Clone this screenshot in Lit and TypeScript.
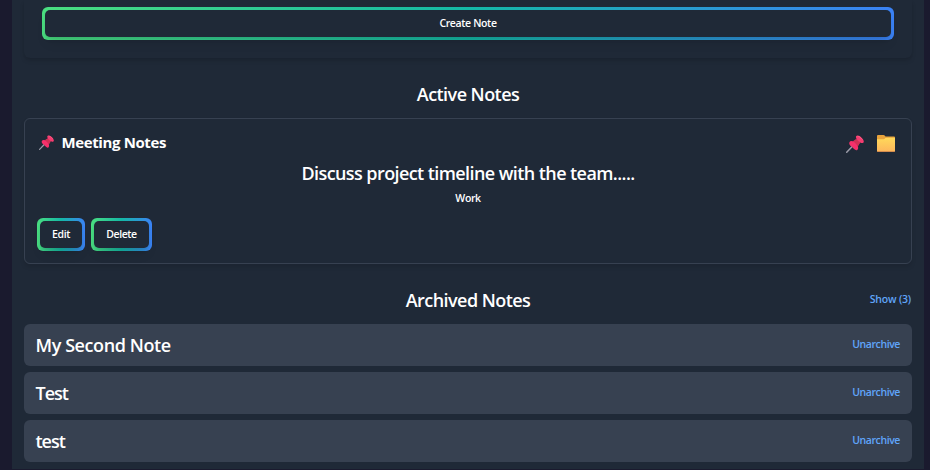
import { LitElement, html, css, svg } from "lit";
import { customElement, property } from "lit/decorators.js";

@customElement("gradient-button")
class GradientButton extends LitElement {
  static styles = css`
    :host { display: block; }
    button {
      display: block; width: 100%; height: 33px; padding: 3px; border: 0; border-radius: 6px;
      background: linear-gradient(to right, #4ade80, #14b8a6, #3b82f6);
      font: inherit; letter-spacing: inherit; color: #fff;
    }
    span {
      display: flex; align-items: center; justify-content: center; height: 27px;
      box-sizing: border-box; padding-bottom: 1px; border-radius: 5px; background: #1f2937;
      box-shadow: 0 7.5px 11px -2px rgba(0, 0, 0, .1), 0 3px 4.5px -1.5px rgba(0, 0, 0, .1);
      white-space: nowrap;
    }
  `;
  render() {
    return html`<button><span><slot></slot></span></button>`;
  }
}

@customElement("pin-icon")
class PinIcon extends LitElement {
  static styles = css`:host { display: block; } svg { display: block; width: 100%; height: 100%; }`;
  render() {
    return html`<svg viewBox="0 0 18 18">${svg`
      <path d="M.7 17.3 7.2 10.5" stroke="#9b9ba8" stroke-width="1.5" stroke-linecap="round"/>
      <path d="M6.3 6.5 11 4.2 13.7 7 11.8 12z" fill="#c92a55"/>
      <path d="M3.4 7.2C4.4 5.3 7.2 5.8 9.6 8.2c2.6 2.5 3.4 5.3 1.7 6.7C9.4 16 7.600 13.600 6 11.800 4 10.600 2.600 9 3.400 7.200z" fill="#f5306b"/>
      <path d="M7.2 6.300 10.300 3.800 14.300 7.700 11.700 11.200C10.800 9 9 7.200 7.200 6.300z" fill="#d13055"/>
      <path d="M10.200 1.100C11.400-.2 13.700.8 15.600 2.700c2 1.900 2.800 4 1.700 5-1.400 1-3.500-.2-5-1.700C10.600 4.500 9.300 2.300 10.200 1.100z" fill="#f43c70"/>
      <path d="M11.600 1.300c1.200-.2 3.500 1.600 4.700 3.200" fill="none" stroke="#ff6e8c" stroke-width=".7"/>
    `}</svg>`;
  }
}

@customElement("folder-icon")
class FolderIcon extends LitElement {
  static styles = css`:host { display: block; } svg { display: block; width: 100%; height: 100%; }`;
  render() {
    return html`<svg viewBox="0 0 18 17">
      <defs><linearGradient id="face" x2="0" y2="1"><stop stop-color="#ffd95a"/><stop offset="1" stop-color="#fdb65c"/></linearGradient></defs>
      <path d="M0 1Q0 0 1 0h5.500q.7 0 1.200.6L8.500 1.500H17q1 0 1 1V15H0z" fill="#e8a33c"/>
      <path d="M0 4.200h6.700q.7 0 1.200-.6l.4-.5q.4-.4 1-.4H18V16q0 .8-.8.800H.8Q0 16.800 0 16z" fill="url(#face)"/>
      <path d="M.2 16.500h17.600" stroke="#d98b4c" stroke-width=".8"/>
    </svg>`;
  }
}

@customElement("archived-note")
class ArchivedNote extends LitElement {
  @property() name = "";
  static styles = css`
    :host {
      display: flex; justify-content: space-between; height: 42px; box-sizing: border-box;
      padding: 0 12px; border-radius: 6px; background: #374151;
    }
    h3 { margin: 0 0 0 -.5px; font-size: 18px; line-height: 43px; font-weight: 600; letter-spacing: inherit; }
    a { color: #60a5fa; font-size: 10.5px; line-height: 40px; letter-spacing: -.42px; }
  `;
  render() {
    return html`<h3>${this.name}</h3><a>Unarchive</a>`;
  }
}

@customElement("app-root")
class AppRoot extends LitElement {
  static styles = css`
    :host {
      display: block; height: 470px; overflow: hidden; box-sizing: border-box; padding: 0 6px 0 12px;
      background: #1a1a2e; color: #fff;
      font-family: "Open Sans", "Noto Sans", sans-serif; font-weight: 600; font-size: 10.5px;
    }
    main { height: 469px; box-sizing: border-box; padding: 0 12px; background: #1f2937; }
    .form {
      height: 58px; box-sizing: border-box; padding: 7px 18px 0; border-radius: 0 0 6px 6px;
      box-shadow: 0 3px 4.5px -.75px rgba(0, 0, 0, .1), 0 1.500px 3px -1.500px rgba(0, 0, 0, .1);
    }
    .create { letter-spacing: -.35px; }
    h2 { margin: 0; font-size: 18px; line-height: 27px; font-weight: 600; text-align: center; letter-spacing: -.55px; }
    .active { margin: 23px 0 10px; }
    .note {
      height: 146px; box-sizing: border-box; padding: 12px; border: 1px solid #374151; border-radius: 6px;
      box-shadow: 0 3px 4.500px -.75px rgba(0, 0, 0, .1);
    }
    .head { display: flex; align-items: center; height: 24px; }
    .small-pin { width: 15px; height: 15px; margin: 0 7.500px 2px 2px; }
    .title { flex: 1; font-size: 15px; line-height: 20px; font-weight: 700; letter-spacing: -.38px; padding-bottom: 2px; }
    .tools { display: flex; gap: 13px; align-items: center; margin: 1px 4px 0 0; }
    .pin { width: 18px; height: 18px; }
    .folder { width: 18px; height: 17px; }
    .body { margin-top: 5px; text-align: center; font-size: 18px; line-height: 27px; letter-spacing: -.58px; }
    .tag { text-align: center; line-height: 22px; letter-spacing: -.4px; }
    .actions { display: flex; gap: 6px; margin-top: 9px; letter-spacing: -.4px; }
    .edit { width: 48px; }
    .delete { width: 61px; }
    .archived { display: grid; grid-template-columns: 1fr auto 1fr; margin: 23px 0 10px; }
    .archived h2 { grid-column: 2; }
    .show { justify-self: end; color: #60a5fa; line-height: 24px; letter-spacing: -.2px; margin-right: 1px; }
    .list { display: grid; gap: 6px; }
    .item { letter-spacing: -.42px; }
    .item.short { letter-spacing: -1px; }
  `;
  render() {
    return html`<main>
      <section class="form"><gradient-button class="create">Create Note</gradient-button></section>
      <h2 class="active">Active Notes</h2>
      <article class="note">
        <div class="head">
          <pin-icon class="small-pin"></pin-icon><span class="title">Meeting Notes</span>
          <div class="tools"><pin-icon class="pin"></pin-icon><folder-icon class="folder"></folder-icon></div>
        </div>
        <div class="body">Discuss project timeline with the team.....</div>
        <div class="tag">Work</div>
        <div class="actions">
          <gradient-button class="edit">Edit</gradient-button>
          <gradient-button class="delete">Delete</gradient-button>
        </div>
      </article>
      <div class="archived"><h2>Archived Notes</h2><a class="show">Show (3)</a></div>
      <div class="list">
        ${["My Second Note", "Test", "test"].map(
          (n) => html`<archived-note class=${n.length < 6 ? "item short" : "item"} .name=${n}></archived-note>`
        )}
      </div>
    </main>`;
  }
}
